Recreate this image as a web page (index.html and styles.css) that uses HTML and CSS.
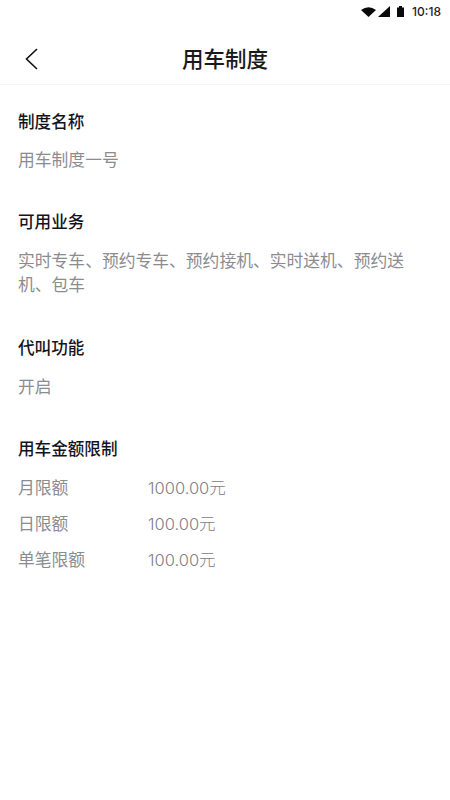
FILE: index.html
```html
<!DOCTYPE html>
<html lang="zh">
<head>
<meta charset="utf-8">
<title>用车制度</title>
<link rel="stylesheet" href="styles.css">
</head>
<body>
<div class="status">
  <svg class="ic-wifi" width="15" height="10" viewBox="0 0 15 10"><path d="M0 3 Q7.500 -2.500 15 3 L7.500 10 Z" fill="#0a0a0a"/></svg>
  <svg class="ic-signal" width="12" height="11" viewBox="0 0 12 11"><path d="M0 11 L12 0 V11 Z" fill="#0a0a0a"/></svg>
  <svg class="ic-batt" width="7" height="11" viewBox="0 0 7 11"><path d="M0 1.500 H2 V0 H5 V1.500 H7 V11 H0 Z" fill="#0a0a0a"/></svg>
  <span class="time">10:18</span>
</div>
<header class="nav">
  <svg class="back" width="14" height="22" viewBox="0 0 14 22"><path d="M13 1 L2.500 11 L13 21" fill="none" stroke="#111" stroke-width="1.600"/></svg>
  <h1 class="title">用车制度</h1>
</header>
<main class="content">
  <section class="sec sec-name">
    <h2 class="label">制度名称</h2>
    <p class="val">用车制度一号</p>
  </section>
  <section class="sec sec-biz">
    <h2 class="label">可用业务</h2>
    <p class="val val-biz">实时专车、预约专车、预约接机、实时送机、预约送机、包车</p>
  </section>
  <section class="sec sec-call">
    <h2 class="label">代叫功能</h2>
    <p class="val val-call">开启</p>
  </section>
  <section class="sec">
    <h2 class="label">用车金额限制</h2>
    <div class="rows">
      <div class="row"><span class="k">月限额</span><span class="amt">1000.00元</span></div>
      <div class="row"><span class="k">日限额</span><span class="amt">100.00元</span></div>
      <div class="row"><span class="k">单笔限额</span><span class="amt">100.00元</span></div>
    </div>
  </section>
</main>
</body>
</html>
```
FILE: styles.css
```css
* { box-sizing: border-box; margin: 0; padding: 0; }
html, body { background: #fff; }
body {
  width: 450px;
  height: 800px;
  overflow: hidden;
  font-family: "Inter", "Noto Sans CJK SC", sans-serif;
}
.status {
  height: 23px;
  display: flex;
  align-items: center;
  justify-content: flex-end;
  padding-right: 9px;
}
.ic-signal { margin-left: 2px; }
.ic-batt { margin-left: 7px; }
.time { font-size: 12px; font-weight: 500; color: #222; margin-left: 8px; line-height: 14px; }
.nav {
  height: 62px;
  padding-top: 10px;
  border-bottom: 1px solid #f5f5f5;
  display: flex;
  align-items: center;
  justify-content: center;
  position: relative;
}
.back { position: absolute; left: 24px; top: 25px; }
.title { font-size: 21.500px; font-weight: 500; color: #1a1a1a; line-height: 24px; }
.content { padding: 25px 18px 0; }
.sec { margin-bottom: 38px; }
.sec-biz { margin-bottom: 39px; }
.label { font-size: 16.600px; font-weight: 500; color: #14141e; line-height: 24px; }
.val { font-size: 16.800px; color: #8c8c90; line-height: 24px; margin-top: 14px; }
.val-biz, .val-call { margin-top: 15px; }
.rows { margin-top: 8px; color: #8c8c90; font-size: 16.800px; }
.row { display: flex; height: 36px; align-items: center; }
.k { width: 130px; }
.amt { font-size: 16.500px; font-weight: 300; color: #808084; }
```
